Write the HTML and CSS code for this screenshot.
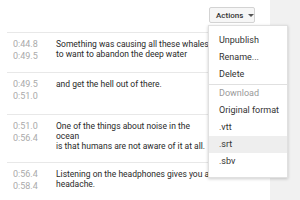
FILE: index.html
```html
<!DOCTYPE html>
<html lang="en">
<head>
    <meta charset="UTF-8">
    <title>Captions</title>
    <link rel="stylesheet" href="styles.css">
</head>
<body>
    <div class="page">
        <div class="editor">
            <div class="toolbar">
                <div class="actions">
                    <button class="actions-btn">Actions <span class="caret"></span></button>
                    <ul class="menu">
                        <li>Unpublish</li>
                        <li>Rename...</li>
                        <li>Delete</li>
                        <li class="divider"></li>
                        <li class="heading">Download</li>
                        <li>Original format</li>
                        <li>.vtt</li>
                        <li class="hover">.srt</li>
                        <li>.sbv</li>
                    </ul>
                </div>
            </div>
            <div class="row">
                <div class="times"><span>0:44.8</span><span>0:49.5</span></div>
                <div class="text">Something was causing all these whales<br>to want to abandon the deep water</div>
            </div>
            <div class="row">
                <div class="times"><span>0:49.5</span><span>0:51.0</span></div>
                <div class="text">and get the hell out of there.</div>
            </div>
            <div class="row">
                <div class="times"><span>0:51.0</span><span>0:56.4</span></div>
                <div class="text">One of the things about noise in the<br>ocean<br>is that humans are not aware of it at all.</div>
            </div>
            <div class="row">
                <div class="times"><span>0:56.4</span><span>0:58.4</span></div>
                <div class="text">Listening on the headphones gives you a<br>headache.</div>
            </div>
        </div>
        <div class="side"></div>
    </div>
</body>
</html>
```

FILE: styles.css
```css
* {
    margin: 0;
    padding: 0;
    box-sizing: border-box;
}

body {
    font-family: Roboto, "Liberation Sans", Arial, sans-serif;
    background: #fff;
    overflow: hidden;
}

.page {
    display: flex;
    width: 300px;
    height: 200px;
}

.editor {
    width: 270px;
    padding-left: 7px;
    background: #fff;
}

.side {
    flex: 1;
    background: #f1f1f1;
}

.toolbar {
    height: 32px;
    padding-top: 7px;
    padding-left: 202px;
}

.actions {
    position: relative;
}

.actions-btn {
    display: flex;
    align-items: center;
    height: 16px;
    width: 46px;
    padding-left: 6px;
    font-family: inherit;
    font-size: 8px;
    font-weight: 500;
    color: #333;
    background: #f6f6f6;
    border: 1px solid #d3d3d3;
    border-radius: 2px;
}

.caret {
    margin-left: 5px;
    border-left: 3px solid transparent;
    border-right: 3px solid transparent;
    border-top: 3px solid #555;
}

.menu {
    position: absolute;
    top: 18px;
    left: -1px;
    width: 80px;
    list-style: none;
    background: #fff;
    border: 1px solid #e0e0e0;
    box-shadow: 0 1px 3px rgba(0, 0, 0, 0.2);
    padding: 6px 0 6px;
    z-index: 2;
}

.menu li {
    height: 17.2px;
    line-height: 17.2px;
    padding-left: 10px;
    font-size: 9px;
    color: #333;
    white-space: nowrap;
}

.menu li.divider {
    height: 1px;
    background: #e0e0e0;
}

.menu li.heading {
    color: #999;
}

.menu li.hover {
    background: #eee;
}

.row {
    display: flex;
    border-top: 1px solid #e8e8e8;
    padding-top: 6px;
}

.row:nth-child(2) { height: 40px; }
.row:nth-child(3) { height: 42px; }
.row:nth-child(4) { height: 48px; }

.times {
    display: flex;
    flex-direction: column;
    width: 49px;
    padding-left: 6px;
    font-size: 9px;
    line-height: 11px;
    color: #aaa;
}

.times span {
    margin-bottom: 1px;
}

.text {
    font-size: 8.5px;
    line-height: 10px;
    color: #2a2a2a;
    white-space: nowrap;
}
```
